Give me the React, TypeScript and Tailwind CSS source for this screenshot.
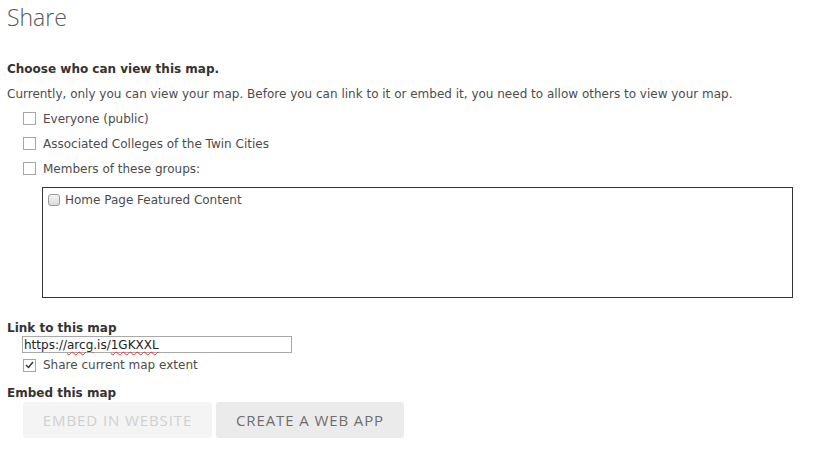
import React from 'react';

const body = { fontFamily: '"DejaVu Sans", Verdana, sans-serif' };

function Box({ checked = false }: { checked?: boolean }) {
  return (
    <span className="flex h-[13px] w-[13px] shrink-0 items-center justify-center border border-[#a6a6a6] bg-white">
      {checked && (
        <svg width="9" height="8" viewBox="0 0 9 8">
          <path d="M1 4 L3.5 6.5 L8 1" fill="none" stroke="#333" strokeWidth="1.4" />
        </svg>
      )}
    </span>
  );
}

function Option({ label, checked }: { label: string; checked?: boolean }) {
  return (
    <label className="flex h-[25px] items-center gap-[7px] pl-[23px]">
      <Box checked={checked} />
      <span>{label}</span>
    </label>
  );
}

export default function App() {
  return (
    <div className="h-[455px] w-[813px] bg-white text-[12px] text-[#4c4c4c]" style={body}>
      <h1
        className="pl-[7px] pt-[3px] text-[23px] font-light leading-[28px] text-[#595959]"
        style={{ fontFamily: '"Open Sans", sans-serif' }}
      >
        Share
      </h1>

      <div className="pl-[7px] pt-[29px] font-bold leading-[18px] text-[#333]">Choose who can view this map.</div>
      <p className="pl-[7px] pt-[7px] leading-[18px]">
        Currently, only you can view your map. Before you can link to it or embed it, you need to allow others to view your map.
      </p>

      <div className="pt-[3px]">
        <Option label="Everyone (public)" />
        <Option label="Associated Colleges of the Twin Cities" />
        <Option label="Members of these groups:" />
      </div>

      <div className="ml-[42px] mt-[6px] h-[111px] w-[751px] border border-[#333] px-[5px] pt-[4px]">
        <label className="flex items-center gap-[5px] leading-[16px]">
          <span className="h-[12px] w-[12px] rounded-[3px] border border-[#999] bg-gradient-to-b from-[#f4f4f4] to-[#dcdcdc]" />
          <span>Home Page Featured Content</span>
        </label>
      </div>

      <div className="pl-[7px] pt-[22px] font-bold leading-[16px] text-[#333]">Link to this map</div>
      <div className="pl-[22px]">
        <div className="flex h-[17px] w-[270px] items-center border border-[#a9a9a9] px-px text-[#222]">
          <span>
            https://
            <span className="underline decoration-[#e33] decoration-wavy decoration-1 underline-offset-2">arcg</span>
            .is/
            <span className="underline decoration-[#e33] decoration-wavy decoration-1 underline-offset-2">1GKXXL</span>
          </span>
        </div>
      </div>
      <div>
        <label className="flex h-[24px] items-center gap-[7px] pl-[23px]">
          <Box checked />
          <span>Share current map extent</span>
        </label>
      </div>

      <div className="pl-[7px] pt-[8px] font-bold leading-[16px] text-[#333]">Embed this map</div>
      <div className="flex gap-[4px] pl-[23px] pt-[1px]" style={{ fontFamily: '"Open Sans", sans-serif' }}>
        <button className="h-[36px] w-[189px] rounded-[3px] bg-[#f4f4f4] text-[15px] tracking-[0.9px] text-[#d0d0d0]">
          EMBED IN WEBSITE
        </button>
        <button className="h-[36px] w-[188px] rounded-[3px] bg-[#ebebeb] text-[15px] tracking-[0.9px] text-[#6e6e6e]">
          CREATE A WEB APP
        </button>
      </div>
    </div>
  );
}
